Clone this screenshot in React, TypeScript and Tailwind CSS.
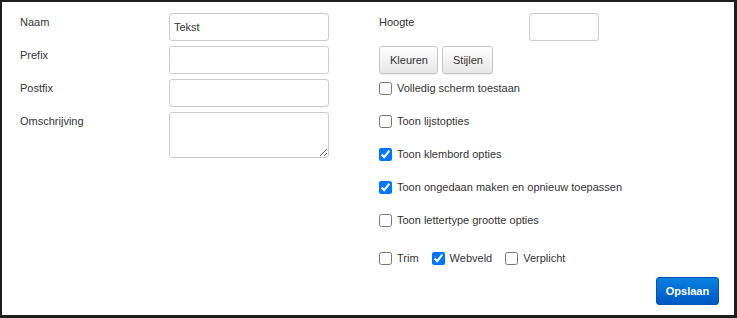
import React from "react";

const font = { fontFamily: '"Liberation Sans", Arial, sans-serif' };

function Check({ label, checked }: { label: string; checked?: boolean }) {
  return (
    <label className="inline-flex items-center gap-[5px] h-[20px] text-[11px] text-[#333]">
      <input type="checkbox" defaultChecked={checked} className="m-0 w-[13px] h-[13px]" />
      <span>{label}</span>
    </label>
  );
}

export default function App() {
  const inputCls =
    "h-[28px] border border-[#cccccc] rounded-[3px] bg-white px-[4px] text-[11px] text-[#333] outline-none";
  const btnCls =
    "h-[28px] px-[10px] border border-[#c6c6c6] rounded-[3px] bg-gradient-to-b from-white to-[#e6e6e6] text-[11px] text-[#333] shadow-[0_1px_1px_rgba(0,0,0,0.08)]";
  return (
    <div
      style={font}
      className="w-[737px] h-[318px] bg-white border-t-2 border-l-2 border-r-[3px] border-b-[3px] border-[#1e1e1e] flex flex-col pl-[18px] pt-[11px] pr-[15px]"
    >
      <div className="flex">
        <div className="w-[359px] grid grid-cols-[149px_160px] gap-y-[5px] content-start">
          <div className="text-[11px] text-[#333] leading-[18px]">Naam</div>
          <input className={inputCls} defaultValue="Tekst" />
          <div className="text-[11px] text-[#333] leading-[18px]">Prefix</div>
          <input className={inputCls} />
          <div className="text-[11px] text-[#333] leading-[18px]">Postfix</div>
          <input className={inputCls} />
          <div className="text-[11px] text-[#333] leading-[18px]">Omschrijving</div>
          <textarea className="h-[46px] border border-[#cccccc] rounded-[3px] bg-white px-[4px] text-[11px] text-[#333] outline-none resize-y block" />
        </div>
        <div className="flex flex-col">
          <div className="flex">
            <div className="w-[150px] text-[11px] text-[#333] leading-[18px]">Hoogte</div>
            <input className={inputCls + " w-[70px]"} />
          </div>
          <div className="flex gap-[4px] mt-[5px]">
            <button className={btnCls + " w-[59px]"}>Kleuren</button>
            <button className={btnCls + " w-[51px]"}>Stijlen</button>
          </div>
          <div className="flex flex-col gap-[13px] mt-[4px] items-start">
            <Check label="Volledig scherm toestaan" />
            <Check label="Toon lijstopties" />
            <Check label="Toon klembord opties" checked />
            <Check label="Toon ongedaan maken en opnieuw toepassen" checked />
            <Check label="Toon lettertype grootte opties" />
          </div>
          <div className="flex gap-[13px] mt-[18px]">
            <Check label="Trim" />
            <Check label="Webveld" checked />
            <Check label="Verplicht" />
          </div>
        </div>
      </div>
      <div className="flex justify-end mt-[9px]">
        <button className="h-[28px] w-[63px] rounded-[3px] border border-[#0052b4] bg-gradient-to-b from-[#0b80e2] to-[#0058c4] text-white font-bold text-[11px]">
          Opslaan
        </button>
      </div>
    </div>
  );
}
